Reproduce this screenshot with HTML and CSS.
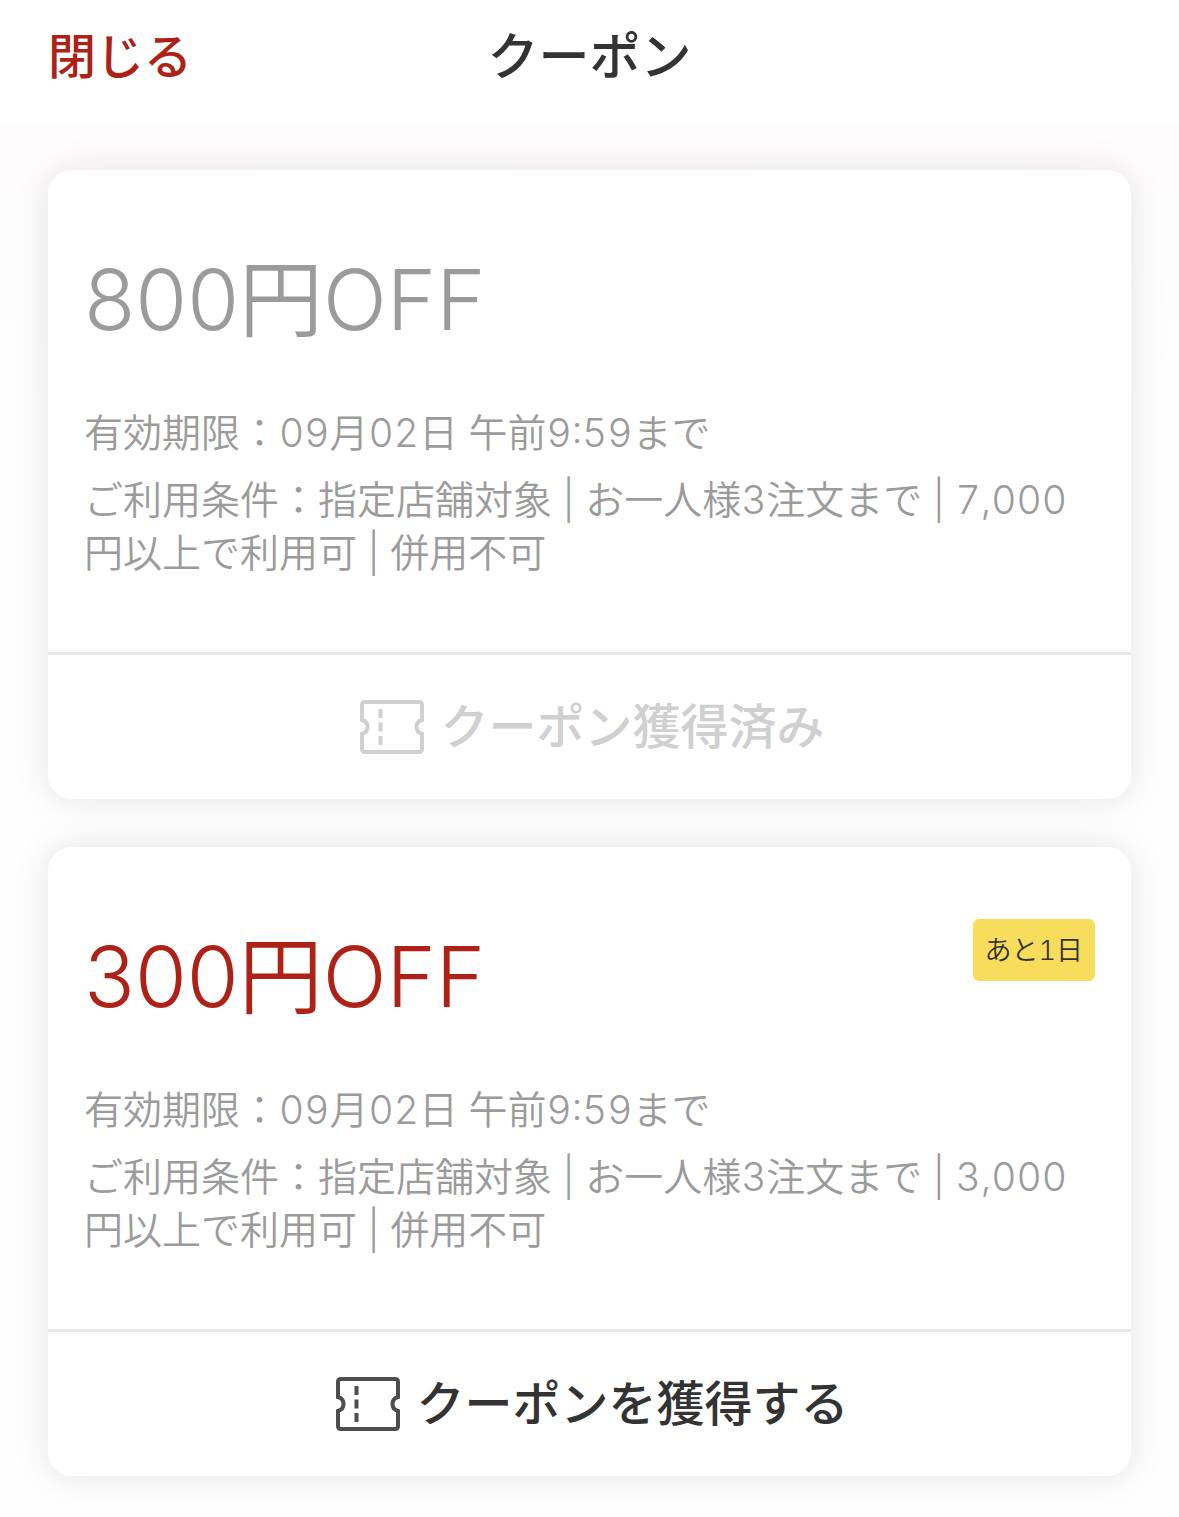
FILE: index.html
```html
<!DOCTYPE html>
<html lang="ja">
<head>
    <meta charset="UTF-8">
    <meta name="viewport" content="width=device-width, initial-scale=1.0">
    <title>クーポン</title>
    <link rel="stylesheet" href="styles.css">
</head>
<body>
    <header class="header">
        <button type="button" class="close-btn">閉じる</button>
        <h1>クーポン</h1>
    </header>

    <main class="coupon-list">
        <article class="coupon used">
            <div class="coupon-body">
                <div class="coupon-top">
                    <h2>800円OFF</h2>
                </div>
                <p class="expiry">有効期限：09月02日 午前9:59まで</p>
                <p class="terms">ご利用条件：指定店舗対象 | お一人様3注文まで | 7,000円以上で利用可 | 併用不可</p>
            </div>
            <button type="button" class="coupon-btn" disabled>
                <svg class="ticket" viewBox="0 0 64 54" aria-hidden="true">
                    <path d="M5 2H59Q62 2 62 5V20C58.500 21 56.500 23.500 56.500 27S58.500 33 62 34V49Q62 52 59 52H5Q2 52 2 49V34C5.500 33 7.500 30.500 7.500 27S5.500 21 2 20V5Q2 2 5 2Z"/>
                    <path d="M20.500 9V18M20.500 22.500V31.500M20.500 36V45"/>
                </svg>
                クーポン獲得済み
            </button>
        </article>

        <article class="coupon">
            <div class="coupon-body">
                <div class="coupon-top">
                    <h2>300円OFF</h2>
                    <span class="badge">あと1日</span>
                </div>
                <p class="expiry">有効期限：09月02日 午前9:59まで</p>
                <p class="terms">ご利用条件：指定店舗対象 | お一人様3注文まで | 3,000円以上で利用可 | 併用不可</p>
            </div>
            <button type="button" class="coupon-btn">
                <svg class="ticket" viewBox="0 0 64 54" aria-hidden="true">
                    <path d="M5 2H59Q62 2 62 5V20C58.500 21 56.500 23.500 56.500 27S58.500 33 62 34V49Q62 52 59 52H5Q2 52 2 49V34C5.500 33 7.500 30.500 7.500 27S5.500 21 2 20V5Q2 2 5 2Z"/>
                    <path d="M20.500 9V18M20.500 22.500V31.500M20.500 36V45"/>
                </svg>
                クーポンを獲得する
            </button>
        </article>
    </main>
</body>
</html>
```
FILE: styles.css
```css
* {
    box-sizing: border-box;
    margin: 0;
    padding: 0;
}

body {
    font-family: Inter, "Noto Sans CJK JP", sans-serif;
    font-weight: 350;
    color: #333;
    background-color: #fffefe;
}

button {
    font-family: inherit;
    border: none;
    background: none;
    cursor: pointer;
}

.header {
    display: grid;
    grid-template-columns: 1fr auto 1fr;
    align-items: center;
    padding: 21px 48px 29px;
    background-color: #fff;
}

.close-btn {
    justify-self: start;
    font-size: 48px;
    font-weight: 500;
    line-height: 72px;
    color: #ae2117;
}

h1 {
    font-size: 51px;
    font-weight: 500;
    line-height: 72px;
}

.coupon-list {
    display: flex;
    flex-direction: column;
    gap: 48px;
    padding: 48px 48px 41px;
    background: linear-gradient(#fefcfc, #fefefe 20%);
}

.coupon {
    background-color: #fff;
    border-radius: 24px;
    box-shadow: 0 0 36px rgba(0, 0, 0, 0.1);
}

.coupon-body {
    padding: 72px 36px 73px;
}

.coupon-top {
    display: flex;
    justify-content: space-between;
    align-items: flex-start;
    margin-bottom: 48px;
}

h2 {
    font-size: 84px;
    font-weight: 350;
    line-height: 116px;
    color: #ae2117;
}

.badge {
    padding: 2px 12px 0;
    font-size: 27px;
    font-variant-numeric: tabular-nums;
    line-height: 60px;
    background-color: #f8dd5c;
    border-radius: 6px;
}

.expiry,
.terms {
    font-size: 39px;
    font-variant-numeric: tabular-nums;
    line-height: 53px;
    color: #9b9b9b;
}

.expiry {
    margin-bottom: 14px;
}

.terms {
    padding-right: 8px;
}

.coupon-btn {
    display: flex;
    justify-content: center;
    align-items: center;
    gap: 16px;
    width: 100%;
    padding: 36px 36px 36px 42px;
    border-top: 3px solid #e8e8e8;
    font-size: 48px;
    font-weight: 500;
    line-height: 72px;
    color: #333;
}

.ticket {
    width: 64px;
    height: 54px;
    fill: none;
    stroke: #4d4d4d;
    stroke-width: 4;
}

.used h2 {
    color: #9b9b9b;
}

.used .coupon-btn {
    color: #d0d0d0;
    cursor: default;
}

.used .ticket {
    stroke: #d0d0d0;
}
```
